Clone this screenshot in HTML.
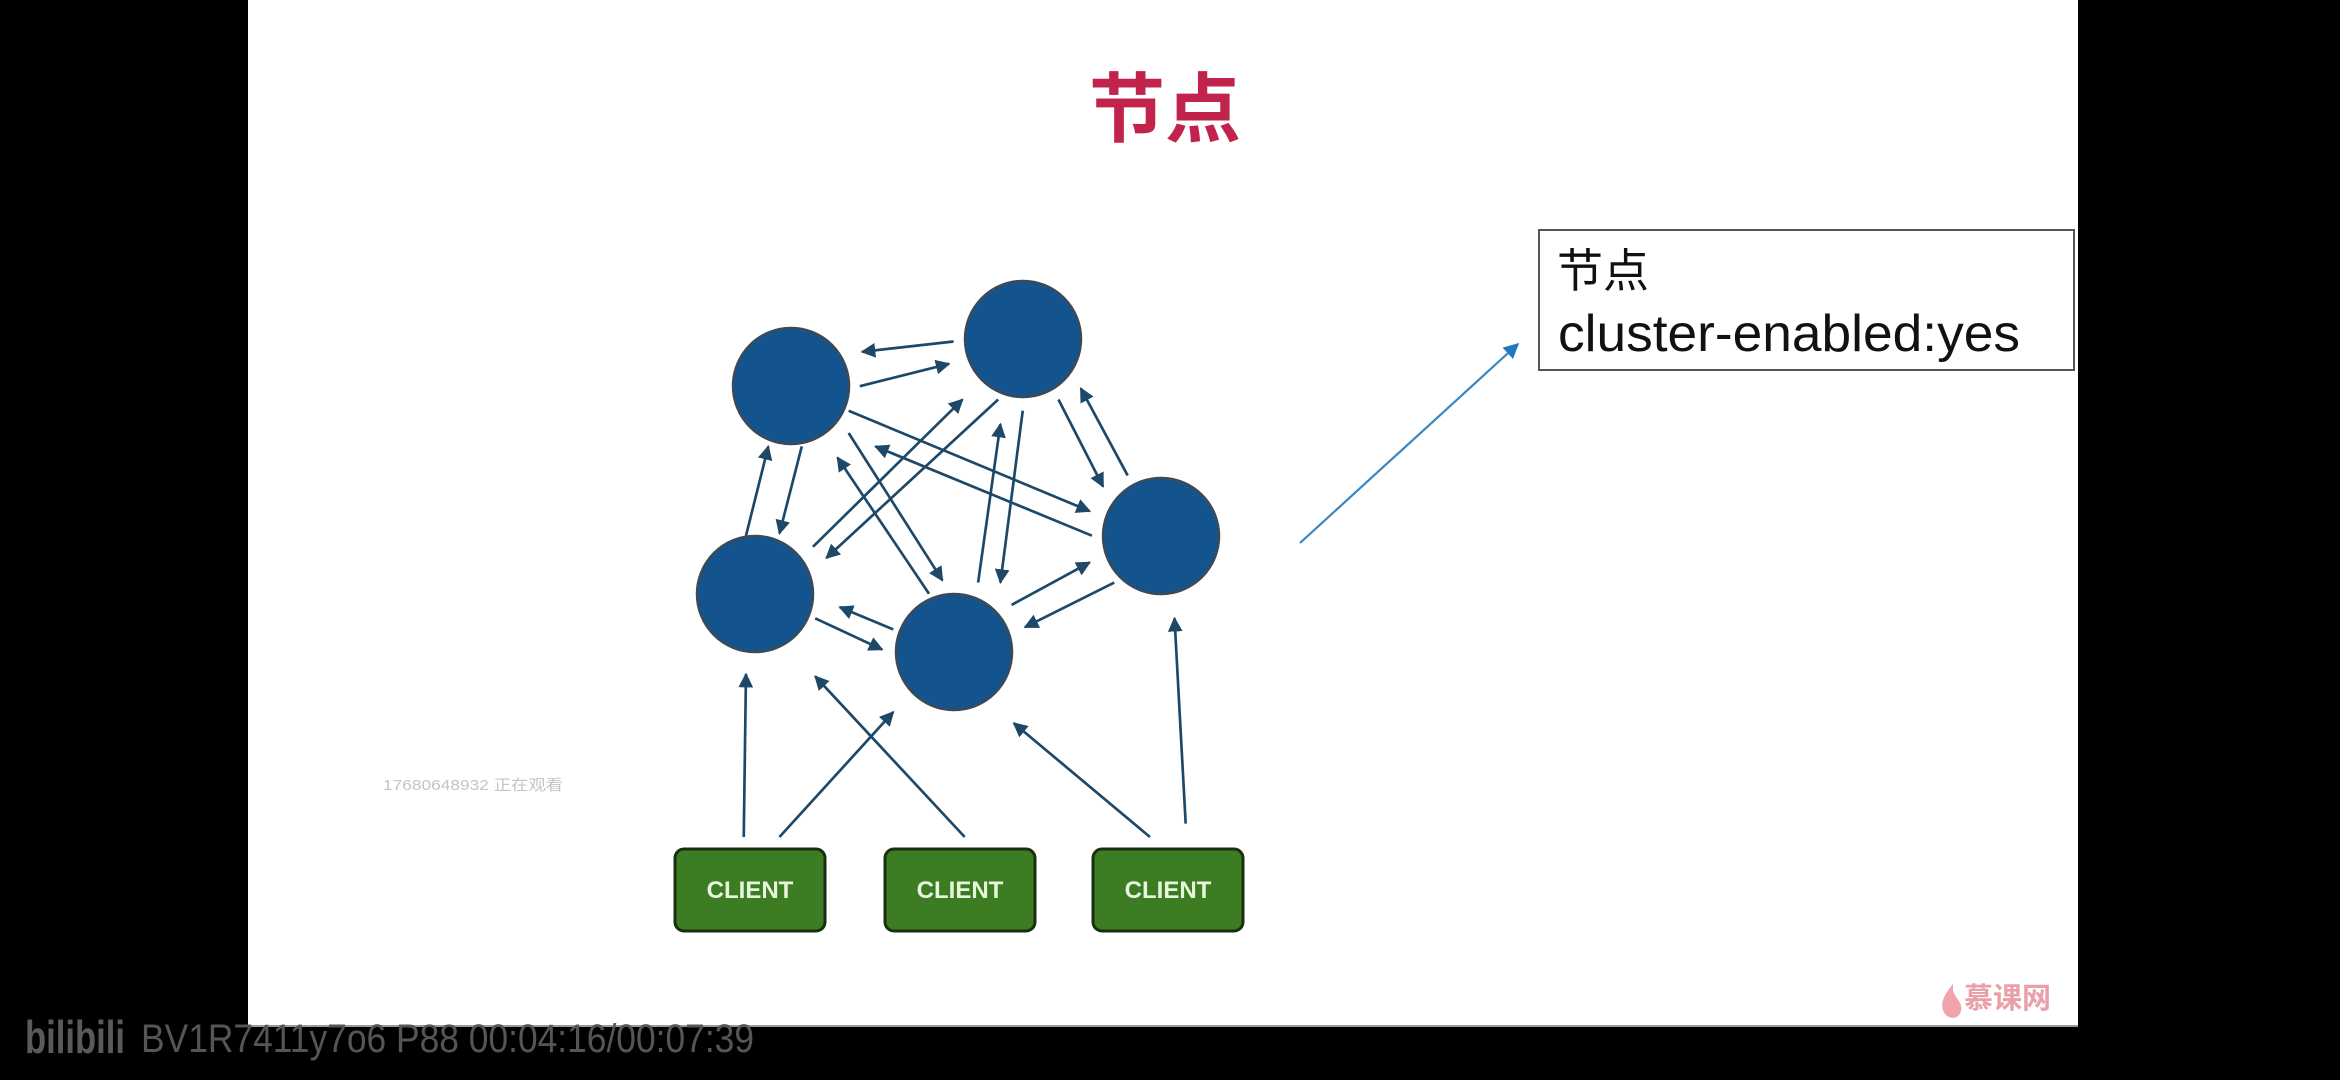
<!DOCTYPE html>
<html><head><meta charset="utf-8"><style>
html,body{margin:0;padding:0;background:#000;width:2340px;height:1080px;overflow:hidden}
svg{display:block}
</style></head><body>
<svg width="2340" height="1080" viewBox="0 0 2340 1080" xmlns="http://www.w3.org/2000/svg">
<defs>
<marker id="ah" viewBox="0 0 10 10" refX="9" refY="5" markerWidth="5.5" markerHeight="5.5" orient="auto" markerUnits="strokeWidth">
<path d="M0,0 L10,5 L0,10 z" fill="#1d4868"/></marker>
<marker id="ah2" viewBox="0 0 10 10" refX="9" refY="5" markerWidth="7" markerHeight="7" orient="auto" markerUnits="strokeWidth">
<path d="M0,0 L10,5 L0,10 z" fill="#1f78c0"/></marker>
</defs>
<rect x="0" y="0" width="2340" height="1080" fill="#000"/>
<rect x="248" y="0" width="1830" height="1027" fill="#fff"/>
<rect x="248" y="1025" width="1830" height="2" fill="#9a9a9a"/>

<text x="1165" y="136" text-anchor="middle" font-family="'Noto Sans CJK SC',sans-serif" font-weight="bold" font-size="76" fill="#c1234d">节点</text>

<rect x="1539" y="230" width="535" height="140" fill="#fff" stroke="#555" stroke-width="2"/>
<text x="1557" y="287" font-family="'Noto Sans CJK SC',sans-serif" font-size="46" fill="#111">节点</text>
<text x="1558" y="351" font-family="'Liberation Sans','DejaVu Sans',sans-serif" font-size="52" fill="#111" textLength="462" lengthAdjust="spacingAndGlyphs">cluster-enabled:yes</text>

<line x1="1300" y1="543" x2="1518" y2="344" stroke="#3a86c0" stroke-width="2.2" marker-end="url(#ah2)"/>

<g transform="translate(650,250) scale(0.4464)" stroke="#1d4868" stroke-width="6" fill="none" marker-end="url(#ah)">
<line x1="680" y1="205" x2="475" y2="228"/>
<line x1="470" y1="305" x2="670" y2="255"/>
<line x1="445" y1="360" x2="985" y2="585"/>
<line x1="990" y1="640" x2="505" y2="440"/>
<line x1="445" y1="410" x2="655" y2="740"/>
<line x1="625" y1="770" x2="420" y2="465"/>
<line x1="365" y1="665" x2="700" y2="335"/>
<line x1="780" y1="335" x2="395" y2="690"/>
<line x1="735" y1="745" x2="785" y2="390"/>
<line x1="835" y1="360" x2="785" y2="745"/>
<line x1="915" y1="335" x2="1015" y2="530"/>
<line x1="1070" y1="505" x2="965" y2="310"/>
<line x1="340" y1="440" x2="290" y2="635"/>
<line x1="215" y1="640" x2="265" y2="440"/>
<line x1="545" y1="850" x2="425" y2="800"/>
<line x1="370" y1="825" x2="520" y2="895"/>
<line x1="810" y1="795" x2="985" y2="700"/>
<line x1="1040" y1="745" x2="840" y2="845"/>
<line x1="210" y1="1315" x2="215" y2="950"/>
<line x1="290" y1="1315" x2="545" y2="1035"/>
<line x1="705" y1="1315" x2="370" y2="955"/>
<line x1="1120" y1="1315" x2="815" y2="1060"/>
<line x1="1200" y1="1285" x2="1175" y2="825"/>
</g>

<g fill="#14548e" stroke="#3c4a58" stroke-width="2.5">
<circle cx="791" cy="386" r="58"/>
<circle cx="1023" cy="339" r="58"/>
<circle cx="1161" cy="536" r="58"/>
<circle cx="755" cy="594" r="58"/>
<circle cx="954" cy="652" r="58"/>
</g>

<g fill="#3c7d23" stroke="#1a2e10" stroke-width="3">
<rect x="675" y="849" width="150" height="82" rx="9"/>
<rect x="885" y="849" width="150" height="82" rx="9"/>
<rect x="1093" y="849" width="150" height="82" rx="9"/>
</g>
<g font-family="'Liberation Sans',sans-serif" font-weight="bold" font-size="24" fill="#e6f5dc" text-anchor="middle">
<text x="750" y="898">CLIENT</text>
<text x="960" y="898">CLIENT</text>
<text x="1168" y="898">CLIENT</text>
</g>

<text x="383" y="790" font-family="'Liberation Sans','Noto Sans CJK SC',sans-serif" font-size="15" fill="#c4c4c4" textLength="180" lengthAdjust="spacingAndGlyphs">17680648932 正在观看</text>

<path d="M1953,984 C1943,996 1939,1005 1945,1014 C1950,1020 1959,1019 1961,1011 C1963,1003 1956,999 1953,991 Z" fill="#f0a4aa"/>
<text x="1964" y="1008" font-family="'Noto Sans CJK SC',sans-serif" font-weight="bold" font-size="29" fill="#eaa0a8">慕课网</text>

<text x="25" y="1053" font-family="'Liberation Sans',sans-serif" font-weight="bold" font-size="46" fill="#5a5a5a" textLength="100" lengthAdjust="spacingAndGlyphs">bilibili</text>
<text x="141" y="1052" font-family="'Liberation Sans',sans-serif" font-size="40" fill="#555" textLength="613" lengthAdjust="spacingAndGlyphs">BV1R7411y7o6 P88 00:04:16/00:07:39</text>
</svg>
</body></html>
